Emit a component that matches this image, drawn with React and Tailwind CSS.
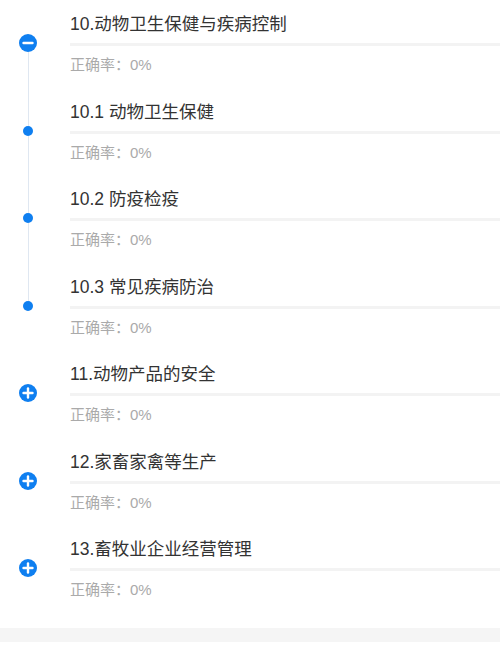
import React from "react";

const items = [
  { title: "10.动物卫生保健与疾病控制", kind: "minus" },
  { title: "10.1 动物卫生保健", kind: "dot" },
  { title: "10.2 防疫检疫", kind: "dot" },
  { title: "10.3 常见疾病防治", kind: "dot" },
  { title: "11.动物产品的安全", kind: "plus" },
  { title: "12.家畜家禽等生产", kind: "plus" },
  { title: "13.畜牧业企业经营管理", kind: "plus" },
];

function CircleIcon({ kind }) {
  return (
    <svg width="18" height="18" viewBox="0 0 18 18" className="block shrink-0">
      <circle cx="9" cy="9" r="9" fill="#0f7ff0" />
      <line x1="4.5" y1="9" x2="13.5" y2="9" stroke="#fff" strokeWidth="2.4" strokeLinecap="round" />
      {kind === "plus" && (
        <line x1="9" y1="4.5" x2="9" y2="13.5" stroke="#fff" strokeWidth="2.4" strokeLinecap="round" />
      )}
    </svg>
  );
}

function Row({ item, idx }) {
  const lineAbove = idx >= 1 && idx <= 3;
  const lineBelow = idx <= 2;
  const isDot = item.kind === "dot";
  return (
    <div className="flex h-[87.5px]">
      <div className="w-[56px] shrink-0 flex flex-col items-center">
        <div className={`${isDot ? "h-[38px]" : "h-[34px]"} w-px ${lineAbove ? "bg-[#dfe7f1]" : ""}`} />
        {isDot ? (
          <div className="w-[10px] h-[10px] rounded-full bg-[#0f7ff0] shrink-0" />
        ) : (
          <CircleIcon kind={item.kind} />
        )}
        <div className={`flex-1 w-px ${lineBelow ? "bg-[#dfe7f1]" : ""}`} />
      </div>
      <div className="flex-1 ml-[14px] pt-[12px]">
        <div className="h-[24px] leading-[24px] text-[17.5px] text-[#333333]">{item.title}</div>
        <div className="mt-[7px] h-[3px] bg-[#f3f3f3]" />
        <div className="mt-[9px] h-[20px] leading-[20px] text-[15px] text-[#aaaaaa]">正确率：0%</div>
      </div>
    </div>
  );
}

export default function App() {
  return (
    <div
      className="w-[500px] h-[650px] bg-white overflow-hidden"
      style={{ fontFamily: '"Liberation Sans", "Noto Sans CJK SC", sans-serif' }}
    >
      <div className="flex flex-col">
        {items.map((it, i) => (
          <Row key={i} item={it} idx={i} />
        ))}
      </div>
      <div className="mt-[15.5px] h-[14px] bg-[#f5f5f5]" />
    </div>
  );
}
